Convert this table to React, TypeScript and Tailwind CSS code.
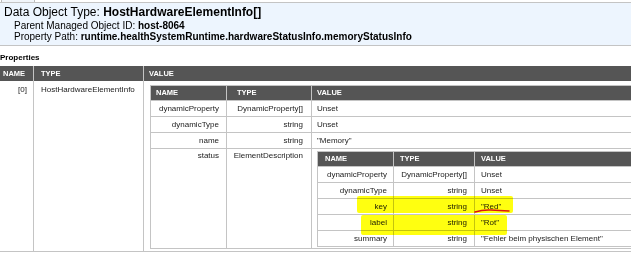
import React from "react";

type Row = [string, string, React.ReactNode];

function InnerRow({ r, last }: { r: Row; last?: boolean }) {
  return (
    <div className="flex border-t border-[#c4c4c4] h-[16px] leading-[15px]">
      <div className="w-[75px] shrink-0 text-right pr-[7px] whitespace-nowrap">{r[0]}</div>
      <div className="w-[85px] shrink-0 border-l border-[#c4c4c4] text-right pr-[8px] whitespace-nowrap">{r[1]}</div>
      <div className="flex-1 border-l border-[#c4c4c4] pl-[5px] whitespace-nowrap">{r[2]}</div>
    </div>
  );
}

function DeepRow({ r }: { r: Row }) {
  return (
    <div className="flex border-t border-[#c4c4c4] h-[16px] leading-[15px]">
      <div className="w-[75px] shrink-0 text-right pr-[6px] whitespace-nowrap">{r[0]}</div>
      <div className="w-[81px] shrink-0 border-l border-[#c4c4c4] text-right pr-[7px] whitespace-nowrap">{r[1]}</div>
      <div className="flex-1 border-l border-[#c4c4c4] pl-[6px] whitespace-nowrap">{r[2]}</div>
    </div>
  );
}

const deepRows: Row[] = [
  ["dynamicProperty", "DynamicProperty[]", "Unset"],
  ["dynamicType", "string", "Unset"],
  ["key", "string", '"Red"'],
  ["label", "string", '"Rot"'],
  ["summary", "string", '"Fehler beim physischen Element"'],
];

const innerRows: Row[] = [
  ["dynamicProperty", "DynamicProperty[]", "Unset"],
  ["dynamicType", "string", "Unset"],
  ["name", "string", '"Memory"'],
];

export default function App() {
  return (
    <div className="relative w-[631px] h-[253px] overflow-hidden bg-white text-[#222] font-['Liberation_Sans',Arial,sans-serif]">
      <div className="h-[2px] flex">
        <div className="ml-[1px] w-[34px] border-x border-[#bbb] bg-[#f1f5fa]" />
      </div>
      <div className="border-y border-[#c4c4c4] bg-[#edf5fe] pl-[4px] pt-[2px] pb-[3px] text-black">
        <div className="text-[12px] leading-[15px] whitespace-nowrap">
          Data Object Type: <b>HostHardwareElementInfo[]</b>
        </div>
        <div className="pl-[10px] text-[10px] leading-[11px] whitespace-nowrap">
          Parent Managed Object ID: <b>host-8064</b>
        </div>
        <div className="pl-[10px] text-[10px] leading-[11px] whitespace-nowrap">
          Property Path: <b>runtime.healthSystemRuntime.hardwareStatusInfo.memoryStatusInfo</b>
        </div>
      </div>
      <div className="mt-[7px] text-[8px] leading-[10px] font-bold text-black">Properties</div>

      <div className="mt-[3px] w-[700px] text-[8px]">
        <div className="flex h-[15px] bg-[#555] text-white font-bold text-[7.5px] leading-[15px]">
          <div className="w-[33px] shrink-0 pl-[3px]">NAME</div>
          <div className="w-[110px] shrink-0 border-l border-[#c4c4c4] pl-[7px]">TYPE</div>
          <div className="flex-1 border-l border-[#c4c4c4] pl-[5px]">VALUE</div>
        </div>
        <div className="flex border-b border-[#c4c4c4]">
          <div className="w-[33px] shrink-0 text-right pr-[6px] pt-[4px] leading-[10px]">[0]</div>
          <div className="w-[110px] shrink-0 border-l border-[#c4c4c4] pl-[7px] pt-[4px] leading-[10px] whitespace-nowrap">
            HostHardwareElementInfo
          </div>
          <div className="flex-1 border-l border-[#c4c4c4] pl-[6px] pt-[4px] pb-[2px]">
            <div className="border border-[#c4c4c4]">
              <div className="flex h-[14px] bg-[#555] text-white font-bold text-[7.5px] leading-[14px]">
                <div className="w-[75px] shrink-0 pl-[5px]">NAME</div>
                <div className="w-[85px] shrink-0 border-l border-[#c4c4c4] pl-[10px]">TYPE</div>
                <div className="flex-1 border-l border-[#c4c4c4] pl-[5px]">VALUE</div>
              </div>
              {innerRows.map((r, i) => (
                <InnerRow key={i} r={r} />
              ))}
              <div className="flex border-t border-[#c4c4c4]">
                <div className="w-[75px] shrink-0 text-right pr-[7px] pt-[2px] leading-[10px]">status</div>
                <div className="w-[85px] shrink-0 border-l border-[#c4c4c4] text-right pr-[8px] pt-[2px] leading-[10px] whitespace-nowrap">
                  ElementDescription
                </div>
                <div className="flex-1 border-l border-[#c4c4c4] pl-[5px] pt-[2px] pb-[1px]">
                  <div className="border border-[#c4c4c4]">
                    <div className="flex h-[14px] bg-[#555] text-white font-bold text-[7.5px] leading-[14px]">
                      <div className="w-[75px] shrink-0 pl-[7px]">NAME</div>
                      <div className="w-[81px] shrink-0 border-l border-[#c4c4c4] pl-[6px]">TYPE</div>
                      <div className="flex-1 border-l border-[#c4c4c4] pl-[6px]">VALUE</div>
                    </div>
                    {deepRows.map((r, i) => (
                      <DeepRow key={i} r={r} />
                    ))}
                  </div>
                </div>
              </div>
            </div>
          </div>
        </div>
      </div>

      {/* marker highlights */}
      <div className="absolute left-[357px] top-[196px] w-[156px] h-[17px] bg-[#ffff10] mix-blend-multiply rounded-[2px]" />
      <div className="absolute left-[361px] top-[215px] w-[146px] h-[20px] bg-[#ffff10] mix-blend-multiply rounded-[2px]" />
      <svg className="absolute left-[473px] top-[207px]" width="38" height="8" viewBox="0 0 38 8">
        <path d="M2 5 Q 10 2.5 18 3 T 36 4" fill="none" stroke="#e01010" strokeWidth="1.5" strokeLinecap="round" />
      </svg>
    </div>
  );
}
